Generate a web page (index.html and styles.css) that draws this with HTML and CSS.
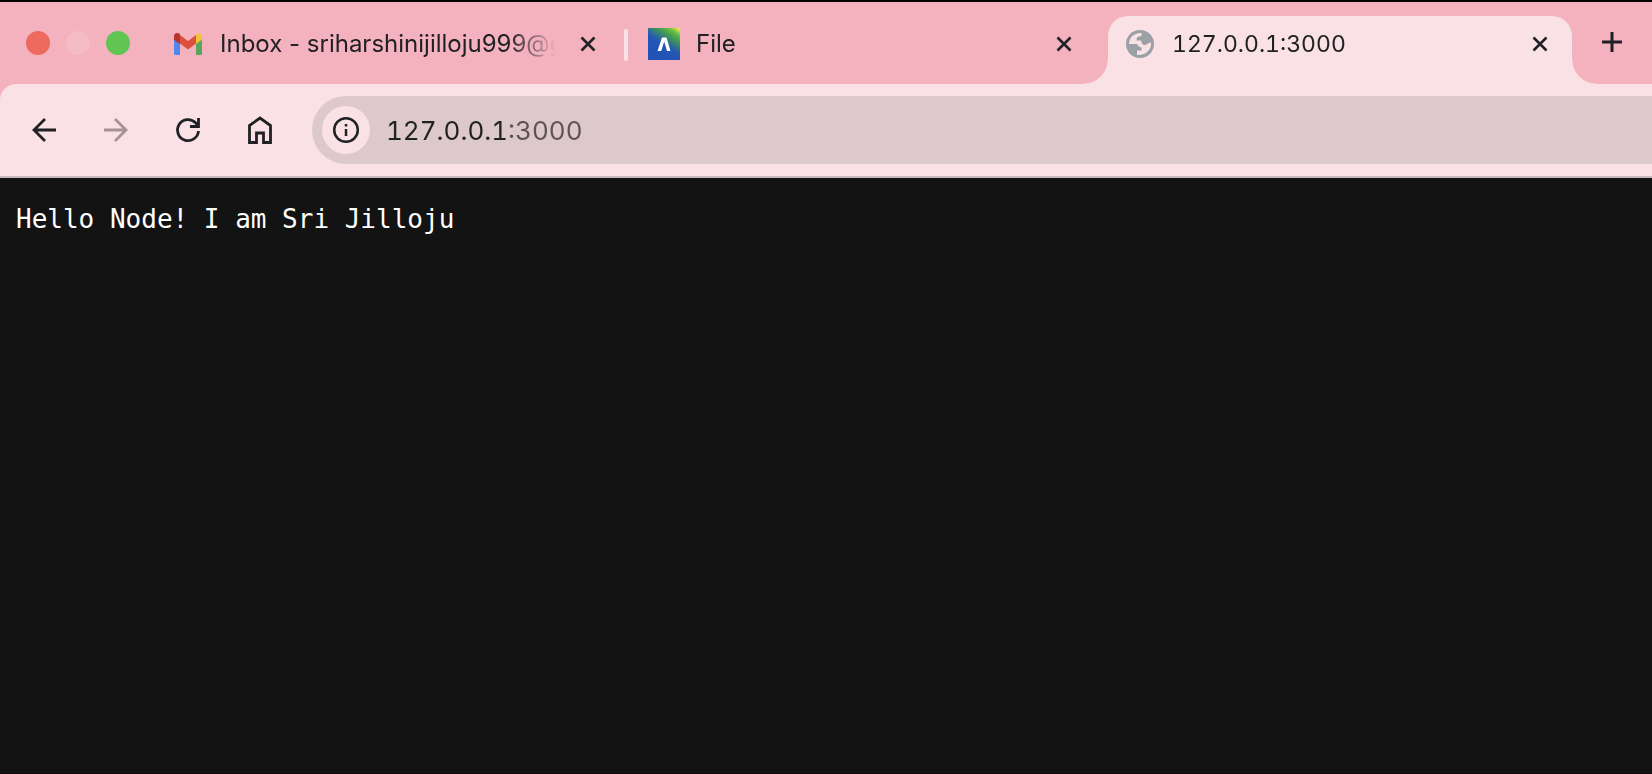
FILE: index.html
```html
<!DOCTYPE html>
<html lang="en">
<head>
<meta charset="utf-8">
<meta name="viewport" content="width=device-width, initial-scale=1">
<title>127.0.0.1:3000</title>
<link rel="stylesheet" href="styles.css">
</head>
<body>
<div class="window">
  <header class="tab-strip">
    <div class="window-controls">
      <button class="control control-close" aria-label="Close window"></button>
      <button class="control control-minimize" aria-label="Minimize window"></button>
      <button class="control control-zoom" aria-label="Zoom window"></button>
    </div>
    <nav class="tabs" aria-label="Tabs">
      <div class="tab tab-separated">
        <svg class="favicon" viewBox="0 0 32 32" aria-hidden="true">
          <path fill="#5187f0" d="M2 11l6 3v13H3.500A1.500 1.500 0 0 1 2 25.500z"/>
          <path fill="#58a75c" d="M24 14l6-4v15.500a1.500 1.500 0 0 1-1.500 1.500H24z"/>
          <path fill="#dc503e" d="M8 7l8 6L24 7v8.500l-8 6-8-6z"/>
          <path fill="#b9352b" d="M2 12V8c0-3 3.500-3.800 5.500-2.300L8 6.500V16z"/>
          <path fill="#f3c23c" d="M24 6.500l.500-.400C27 4.300 30 5.300 30 8.500v3L24 16z"/>
        </svg>
        <a class="tab-title" href="#inbox">Inbox - sriharshinijilloju999@g</a>
        <button class="tab-close" aria-label="Close Inbox tab"><svg viewBox="0 0 16 16" aria-hidden="true"><path d="M1.500 1.500l13 13M14.500 1.500l-13 13"/></svg></button>
      </div>
      <div class="tab">
        <svg class="favicon" viewBox="0 0 32 32" aria-hidden="true">
          <defs>
            <linearGradient id="file-base" x1="0.250" y1="1" x2="0.900" y2="0"><stop offset="0" stop-color="#2052b8"/><stop offset=".45" stop-color="#2456b4"/><stop offset=".75" stop-color="#43a04c"/><stop offset=".88" stop-color="#69bb49"/><stop offset="1" stop-color="#d8ea40"/></linearGradient>
          </defs>
          <path fill="url(#file-base)" d="M0 0h32v32H0z"/>
          <path fill="#fff" d="M9.500 23L14 9.500h4.500L22.500 23H19l-2.800-9.500L13.200 23z"/>
        </svg>
        <a class="tab-title" href="#file">File</a>
        <button class="tab-close" aria-label="Close File tab"><svg viewBox="0 0 16 16" aria-hidden="true"><path d="M1.500 1.500l13 13M14.500 1.500l-13 13"/></svg></button>
      </div>
      <div class="tab tab-active">
        <svg class="favicon" viewBox="0 0 32 32" aria-hidden="true">
          <circle cx="16" cy="16" r="14" fill="#9aa0a6"/>
          <path fill="#fae1e5" d="M5 16C5 10 9.500 5 16.500 5C18.500 5 18 8.500 15.500 8.500C13 8.500 12.500 9.500 12.500 12.500H17C17.500 15 18.500 17 20.500 17C23 17 23 15 27 14.500C28 21 22.500 27.500 13 27V22.500H17.500C18 19 16.500 19 14.500 18.500C14 16.500 13 16 11 16z"/>
        </svg>
        <a class="tab-title numeric-title" href="#local" aria-current="page">127.0.0.1:3000</a>
        <button class="tab-close" aria-label="Close 127.0.0.1:3000 tab"><svg viewBox="0 0 16 16" aria-hidden="true"><path d="M1.500 1.500l13 13M14.500 1.500l-13 13"/></svg></button>
      </div>
    </nav>
    <button class="new-tab" aria-label="New tab"><svg viewBox="0 0 20 20" aria-hidden="true"><path d="M10 0v20M0 10h20"/></svg></button>
  </header>
  <div class="toolbar-backdrop">
    <div class="toolbar">
      <button class="tool" aria-label="Back"><svg viewBox="0 0 32 32" aria-hidden="true"><path d="M28 16H6M17 5L6 16l11 11"/></svg></button>
      <button class="tool" aria-label="Forward" disabled><svg viewBox="0 0 32 32" aria-hidden="true"><path d="M4 16h22M15 5l11 11-11 11"/></svg></button>
      <button class="tool" aria-label="Reload"><svg viewBox="0 0 32 32" aria-hidden="true"><path d="M26.500 17A10.500 10.500 0 1 1 23.500 8.700L26 11.500M26.500 4v8.500H18"/></svg></button>
      <button class="tool" aria-label="Home"><svg viewBox="0 0 32 32" aria-hidden="true"><path d="M5.500 28.500V11.500L16 4l10.500 7.500v17h-7V19h-7v9.500z"/></svg></button>
      <div class="address-bar">
        <button class="site-info" aria-label="View site information"><svg viewBox="0 0 28 28" aria-hidden="true"><circle cx="14" cy="14" r="11.800"/><path d="M14 13v7M14 8v2.500"/></svg></button>
        <input class="address" type="text" aria-label="Address" value="127.0.0.1:3000" spellcheck="false">
      </div>
    </div>
  </div>
  <main class="page">
    <pre class="output">Hello Node! I am Sri Jilloju</pre>
  </main>
</div>
</body>
</html>
```
FILE: styles.css
```css
* { box-sizing: border-box; }

body {
  margin: 0;
  background: #131313;
  color: #202124;
  font-family: Inter, "Liberation Sans", sans-serif;
}

button {
  display: grid;
  place-items: center;
  flex: none;
  margin: 0;
  padding: 0;
  border: 0;
  background: none;
  color: inherit;
}

svg { display: block; }

.window {
  display: flex;
  flex-direction: column;
  min-height: 100vh;
  overflow: hidden;
  border-top: 2px solid #000;
  border-bottom: 1px solid #17060d;
}

.tab-strip {
  display: flex;
  height: 82px;
  padding: 14px 16px 0 26px;
  background: #f4b1be;
}

.window-controls {
  display: flex;
  flex: none;
  gap: 16px;
  width: 130px;
  padding-top: 15px;
}

.control { width: 24px; height: 24px; border-radius: 50%; }
.control-close { background: #ed6a5e; }
.control-minimize { background: #f5bcc6; }
.control-zoom { background: #61c554; }

.tabs {
  display: flex;
  flex: 0 1 1416px;
  min-width: 0;
  gap: 12px;
}

.tab {
  position: relative;
  display: flex;
  flex: 1;
  min-width: 0;
  align-items: center;
  padding: 0 16px 12px;
}

.tab-separated::after {
  content: "";
  position: absolute;
  top: 13px;
  right: -8px;
  width: 4px;
  height: 32px;
  border-radius: 2px;
  background: #fae1e5;
}

.tab-active { border-radius: 20px 20px 0 0; background: #fae1e5; }

.tab-active::before,
.tab-active::after {
  content: "";
  position: absolute;
  bottom: 0;
  width: 24px;
  height: 24px;
}

.tab-active::before {
  right: 100%;
  background: radial-gradient(circle at 0 0, transparent 23px, #fae1e5 24px);
}

.tab-active::after {
  left: 100%;
  background: radial-gradient(circle at 100% 0, transparent 23px, #fae1e5 24px);
}

.favicon { flex: none; width: 32px; height: 32px; }

.tab-title {
  flex: 1;
  min-width: 0;
  margin: 0 16px;
  overflow: hidden;
  color: inherit;
  font-size: 24px;
  line-height: 32px;
  text-decoration: none;
  white-space: nowrap;
  -webkit-mask-image: linear-gradient(to left, transparent, #000 48px);
  mask-image: linear-gradient(to left, transparent, #000 48px);
}

.numeric-title { font-size: 23px; font-variant-numeric: tabular-nums; }

.tab-close { width: 32px; height: 32px; }
.tab-close svg { width: 16px; height: 16px; }
.tab-close path { fill: none; stroke: currentColor; stroke-width: 2.6; }

.new-tab { width: 40px; height: 52px; margin-left: 20px; }
.new-tab svg { width: 20px; height: 20px; }
.new-tab path { stroke: currentColor; stroke-width: 3; }

.toolbar-backdrop { background: #f4b1be; }

.toolbar {
  display: flex;
  align-items: center;
  padding: 12px 0 12px 8px;
  border-bottom: 2px solid #c9b8bd;
  border-top-left-radius: 16px;
  background: #fae1e5;
}

.tool { width: 72px; height: 68px; }
.tool svg { width: 32px; height: 32px; }
.tool path { fill: none; stroke: currentColor; stroke-width: 2.8; }
.tool:disabled { color: #a69196; }

.address-bar {
  display: flex;
  flex: 1;
  align-items: center;
  gap: 16px;
  min-width: 0;
  margin-left: 16px;
  padding: 10px;
  border-radius: 34px 0 0 34px;
  background: #ddc8cb;
}

.site-info { width: 48px; height: 48px; border-radius: 50%; background: #fae1e5; }
.site-info svg { width: 28px; height: 28px; }
.site-info circle,
.site-info path { fill: none; stroke: currentColor; stroke-width: 2.5; }

/* The host part is dark and the port is dimmed. */
.address {
  flex: 1;
  min-width: 0;
  height: 48px;
  padding: 0;
  border: 0;
  outline: 0;
  background: linear-gradient(to right, #202124 119px, #5d5356 119px);
  -webkit-background-clip: text;
  background-clip: text;
  color: transparent;
  font-family: inherit;
  font-size: 26px;
  font-variant-numeric: tabular-nums;
}

.page { flex: 1; padding: 26px 16px; background: #131313; }

.output {
  margin: 0;
  color: #fff;
  font: 26px/30px "DejaVu Sans Mono", monospace;
}
```
